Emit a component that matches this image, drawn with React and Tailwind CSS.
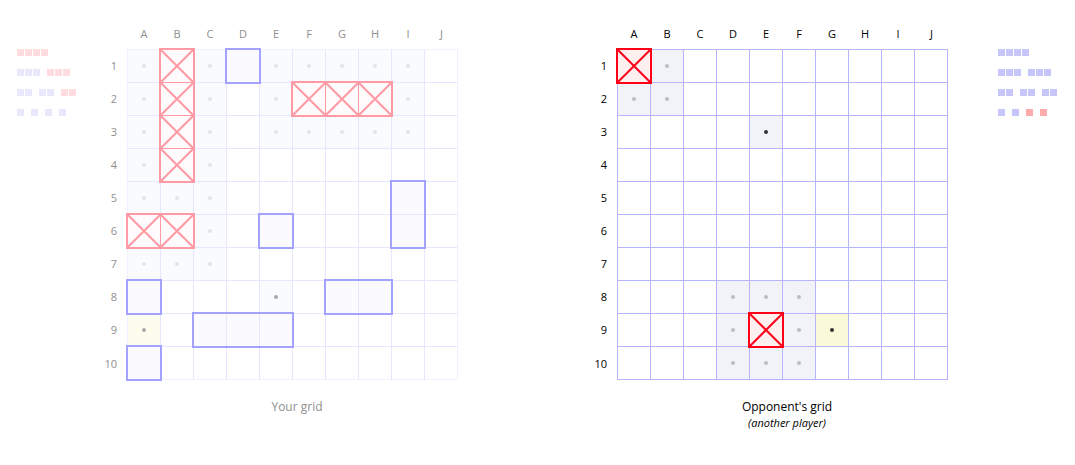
import React from "react";

const COLUMNS = ["A", "B", "C", "D", "E", "F", "G", "H", "I", "J"];
const ROWS = [1, 2, 3, 4, 5, 6, 7, 8, 9, 10];

const SPAN_WIDTH = { 1: "w-[36px]", 2: "w-[69px]", 3: "w-[102px]", 4: "w-[135px]" };
const SPAN_HEIGHT = { 1: "h-[36px]", 2: "h-[69px]", 3: "h-[102px]", 4: "h-[135px]" };

const THEMES = {
  waiting: {
    text: "text-[#8f8f8f]",
    line: "border-[#e6e6ff]",
    top: "border-t-[#f0f0ff]",
    right: "border-r-[#f0f0ff]",
    bottom: "border-b-[#f0f0ff]",
    left: "border-l-[#f0f0ff]",
    ship: "border-[#a3a3ff] bg-[#e6e6ff]/20",
    hitShip: "border-[#ff99a3]",
    hit: "bg-[#fffafb]",
    hitLine: "border-[#ff99a3]",
    stroke: "stroke-[#ff99a3]",
    auto: "bg-[#fafbfe]",
    last: "bg-[#fcfded]",
    autoDot: "bg-[#e3e4e6]",
    dot: "bg-[#a8a8a8]",
    intact: "bg-[#e8e8fd]",
    killed: "bg-[#ffdddf]",
  },
  active: {
    text: "text-black",
    line: "border-[#b4b4ff]",
    top: "",
    right: "",
    bottom: "",
    left: "",
    ship: "border-[#0000ff] bg-[#f2f2ff]",
    hitShip: "border-[#ff0019]",
    hit: "bg-[#fff0f0]",
    hitLine: "border-[#ff0019]",
    stroke: "stroke-[#ff0019]",
    auto: "bg-[#f2f3f8]",
    last: "bg-[#fafad8]",
    autoDot: "bg-[#bcbdbf]",
    dot: "bg-[#333333]",
    intact: "bg-[#c6c6fa]",
    killed: "bg-[#ffabae]",
  },
};

const PLAYER = {
  theme: "waiting",
  ships: [
    { at: "B1", w: 1, h: 4, hit: true },
    { at: "D1", w: 1, h: 1 },
    { at: "F2", w: 3, h: 1, hit: true },
    { at: "I5", w: 1, h: 2 },
    { at: "A6", w: 2, h: 1, hit: true },
    { at: "E6", w: 1, h: 1 },
    { at: "A8", w: 1, h: 1 },
    { at: "G8", w: 2, h: 1 },
    { at: "C9", w: 3, h: 1 },
    { at: "A10", w: 1, h: 1 },
  ],
  hits: "B1 B2 B3 B4 F2 G2 H2 A6 B6".split(" "),
  auto: "A1 C1 E1 F1 G1 H1 I1 A2 C2 E2 I2 A3 C3 E3 F3 G3 H3 I3 A4 C4 A5 B5 C5 C6 A7 B7 C7".split(" "),
  misses: ["E8"],
  last: "A9",
  fleet: [
    [[4, true]],
    [[3, false], [3, true]],
    [[2, false], [2, false], [2, true]],
    [[1, false], [1, false], [1, false], [1, false]],
  ],
};

const OPPONENT = {
  theme: "active",
  ships: [
    { at: "A1", w: 1, h: 1, hit: true },
    { at: "E9", w: 1, h: 1, hit: true },
  ],
  hits: ["A1", "E9"],
  auto: "B1 A2 B2 D8 E8 F8 D9 F9 D10 E10 F10".split(" "),
  misses: ["E3"],
  last: "G9",
  fleet: [
    [[4, false]],
    [[3, false], [3, false]],
    [[2, false], [2, false], [2, false]],
    [[1, false], [1, false], [1, true], [1, true]],
  ],
};

function Fleet({ rows, theme }) {
  return (
    <div className="mt-[29px] flex w-[60px] shrink-0 flex-col gap-[13px]">
      {rows.map((ships, i) => (
        <div key={i} className="flex gap-[7px]">
          {ships.map(([size, killed], j) => (
            <div key={j} className="flex gap-px">
              {Array.from({ length: size }, (_, k) => (
                <span key={k} className={`size-[7px] ${killed ? theme.killed : theme.intact}`} />
              ))}
            </div>
          ))}
        </div>
      ))}
    </div>
  );
}

function Cell({ column, row, board, theme }) {
  const id = `${column}${row}`;
  const hit = board.hits.includes(id);
  const auto = board.auto.includes(id);
  const miss = board.misses.includes(id);
  const last = board.last === id;
  const ship = board.ships.find((s) => s.at === id);
  const above = `${column}${row - 1}`;
  const before = `${COLUMNS[COLUMNS.indexOf(column) - 1]}${row}`;
  const fill = hit ? theme.hit : last ? theme.last : auto || miss ? theme.auto : "";
  const edges = [
    row === 1 && theme.top,
    row === 10 && `border-b ${theme.bottom}`,
    column === "A" && theme.left,
    column === "J" && `border-r ${theme.right}`,
  ]
    .filter(Boolean)
    .join(" ");

  return (
    <td
      className={`relative border-t border-l p-0 ${row === 10 ? "h-[34px]" : "h-[33px]"} ${theme.line} ${edges} ${fill}`}
    >
      {hit && (
        <svg viewBox="0 0 32 32" className={`absolute top-0 left-0 size-8 ${theme.stroke}`} strokeWidth="2" aria-hidden="true">
          <path d="M0 0L32 32M32 0L0 32" />
        </svg>
      )}
      {hit && board.hits.includes(above) && (
        <span className={`absolute -top-px left-0 w-full border-t ${theme.hitLine}`} />
      )}
      {hit && board.hits.includes(before) && (
        <span className={`absolute top-0 -left-px h-full border-l ${theme.hitLine}`} />
      )}
      {(auto || miss || last) && (
        <span className={`mx-auto block size-1 rounded-full ${auto ? theme.autoDot : theme.dot}`} />
      )}
      {ship && (
        <div
          className={`absolute -top-[2px] -left-[2px] z-10 border-2 ${SPAN_WIDTH[ship.w]} ${SPAN_HEIGHT[ship.h]} ${
            ship.hit ? theme.hitShip : theme.ship
          }`}
        />
      )}
    </td>
  );
}

function Board({ board, theme, title, note }) {
  return (
    <section className={`shrink-0 ${theme.text}`}>
      <table className="table-fixed border-separate border-spacing-0 text-[11px] leading-4" aria-label={title}>
        <colgroup>
          <col className="w-[30px]" />
          {COLUMNS.map((c) => (
            <col key={c} className={c === "J" ? "w-[34px]" : "w-[33px]"} />
          ))}
        </colgroup>
        <thead>
          <tr className="h-[29px]">
            <td className="p-0" />
            {COLUMNS.map((c) => (
              <th key={c} scope="col" className="p-0 pb-[2px] pl-px font-normal">
                {c}
              </th>
            ))}
          </tr>
        </thead>
        <tbody>
          {ROWS.map((row) => (
            <tr key={row}>
              <th scope="row" className="p-0 pt-px pr-[10px] text-right font-normal">
                {row}
              </th>
              {COLUMNS.map((column) => (
                <Cell key={column} column={column} row={row} board={board} theme={theme} />
              ))}
            </tr>
          ))}
        </tbody>
      </table>
      <div className="mt-[18px] pl-[39px] text-center">
        <h2 className="text-[12px] leading-[18px]">{title}</h2>
        {note && <p className="text-[11px] leading-[14px] italic">{note}</p>}
      </div>
    </section>
  );
}

export default function App() {
  const mine = THEMES[PLAYER.theme];
  const theirs = THEMES[OPPONENT.theme];
  return (
    <main className="flex flex-wrap justify-between gap-y-8 bg-white px-[17px] pt-5 pb-8 font-['Open_Sans','Noto_Sans',sans-serif]">
      <div className="flex gap-5">
        <Fleet rows={PLAYER.fleet} theme={mine} />
        <Board board={PLAYER} theme={mine} title="Your grid" />
      </div>
      <div className="flex gap-[50px]">
        <Board board={OPPONENT} theme={theirs} title="Opponent's grid" note="(another player)" />
        <Fleet rows={OPPONENT.fleet} theme={theirs} />
      </div>
    </main>
  );
}
